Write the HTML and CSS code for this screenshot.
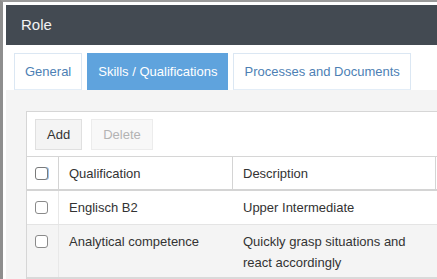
FILE: index.html
```html
<!DOCTYPE html>
<html lang="en">
<head>
  <meta charset="UTF-8" />
  <title>Role</title>
  <link rel="stylesheet" href="styles.css">
</head>
<body>
  <div class="frame">
    <header class="dlg-header">Role</header>

    <!-- Tabs -->
    <nav class="tabs">
      <a class="tab">General</a>
      <a class="tab is-active">Skills / Qualifications</a>
      <a class="tab">Processes and Documents</a>
    </nav>

    <section class="panel">
      <div class="grid-box">
        <div class="toolbar">
          <button class="btn">Add</button>
          <button class="btn is-disabled">Delete</button>
        </div>

        <div class="row row--head">
          <div class="cell cell--check"><span class="check check--focus"></span></div>
          <div class="cell">Qualification</div>
          <div class="cell">Description</div>
          <div class="cell"></div>
        </div>
        <div class="row">
          <div class="cell cell--check"><span class="check"></span></div>
          <div class="cell">Englisch B2</div>
          <div class="cell">Upper Intermediate</div>
          <div class="cell"></div>
        </div>
        <div class="row row--alt row--last">
          <div class="cell cell--check"><span class="check"></span></div>
          <div class="cell">Analytical competence</div>
          <div class="cell">Quickly grasp situations and react accordingly</div>
          <div class="cell"></div>
        </div>
      </div>
    </section>
  </div>
</body>
</html>
```

FILE: styles.css
```css
* { box-sizing: border-box; margin: 0; padding: 0; }

html, body {
  height: 100%;
  overflow: hidden;
}

body {
  background-color: #fff;
  font-family: 'Liberation Sans', Arial, sans-serif;
  font-size: 13px;
  color: #333;
}

.frame {
  height: 100%;
  border-top: 2px solid #9a9a9a;
  border-left: 3px solid #8e8e8e;
  padding: 3px 0 0 3px;
}

.dlg-header {
  height: 40px;
  line-height: 40px;
  padding-left: 15px;
  background-color: #434a52;
  color: #f2f2f2;
  font-size: 15px;
}

.tabs {
  display: flex;
  gap: 5px;
  padding: 8px 0 0 8px;
  background-color: #fff;
}

.tab {
  display: block;
  height: 37px;
  line-height: 35px;
  padding: 0 10px;
  border: 1px solid #dbe7f3;
  border-bottom-color: #e3edf7;
  color: #4d7fb4;
  white-space: nowrap;
}

.tab.is-active {
  background-color: #5fa3dd;
  border-color: #5fa3dd;
  color: #fff;
}

.panel {
  height: 100%;
  background-color: #f4f4f4;
  padding: 21px 0 0 20px;
}

.grid-box {
  width: 640px;
  background-color: #fff;
  border: 1px solid #d6d6d6;
}

.toolbar {
  display: flex;
  gap: 9px;
  padding: 7px 0 6px 8px;
  border-bottom: 1px solid #d6d6d6;
}

.btn {
  height: 31px;
  padding: 0 11px;
  font-family: inherit;
  font-size: 13px;
  color: #333;
  background-color: #f4f4f4;
  border: 1px solid #e0e0e0;
}

.btn.is-disabled {
  color: #b3b3b3;
  background-color: #f8f8f8;
  border-color: #ececec;
}

.row {
  display: grid;
  grid-template-columns: 32px 174px 203px 1fr;
  border-bottom: 1px solid #e4e4e4;
}

.row--head {
  height: 34px;
  border-bottom: 2px solid #d4d4d4;
}

.row--alt {
  background-color: #f4f4f4;
}

.row--last {
  border-bottom: 2px solid #d9d9d9;
}

.cell {
  padding: 6px 10px;
  line-height: 21px;
  border-right: 1px solid #dedede;
}

.row--head .cell {
  padding-top: 6px;
  border-right-color: #d4d4d4;
}

.row:not(.row--head) .cell {
  border-right-color: transparent;
}

.row:not(.row--head) .cell--check {
  border-right-color: #e8e8e8;
}

.row--alt .cell {
  padding-bottom: 4px;
}

.cell--check {
  padding: 10px 0 0 8px;
}

.row--head .cell--check {
  padding-top: 10px;
}

.check {
  display: block;
  width: 13px;
  height: 13px;
  border: 1px solid #8a8a8a;
  border-radius: 3px;
  background-color: #fff;
}

.check--focus {
  border-color: #7a7a7a;
  box-shadow: 1px 0 0 #9cc4ee;
}
```
